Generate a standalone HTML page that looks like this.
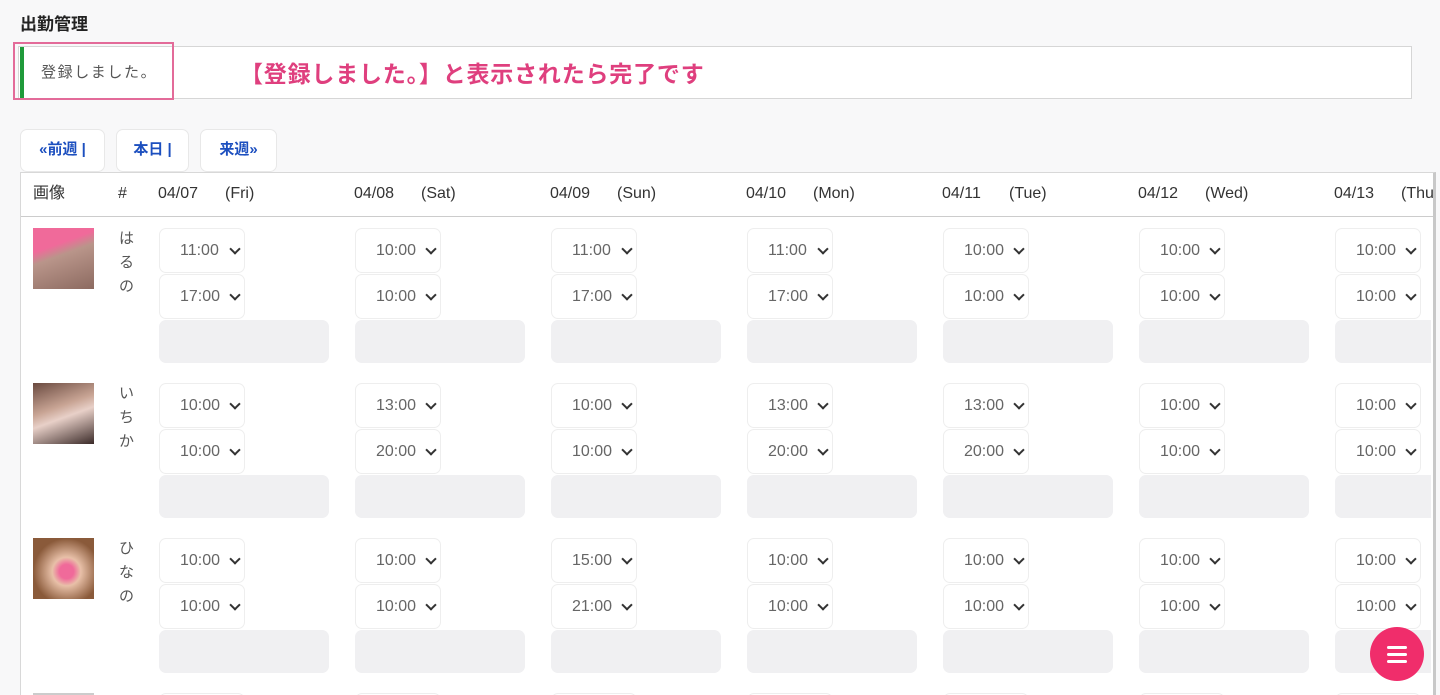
<!DOCTYPE html>
<html><head><meta charset="utf-8"><style>
*{box-sizing:border-box;margin:0;padding:0}
html,body{width:1440px;height:695px;overflow:hidden}
body{background:#f8f8f9;font-family:"Liberation Sans","Noto Sans CJK JP",sans-serif;position:relative;color:#333}
.abs{position:absolute}
h1{position:absolute;left:20px;top:10px;font-size:17px;font-weight:bold;color:#222}
.alert{left:18px;top:46px;width:1394px;height:53px;background:#fff;border:1px solid #d6d6d6}
.alert .bar{position:absolute;left:1px;top:0;width:4px;height:51px;background:#1f9a3a}
.pink{left:13px;top:42px;width:161px;height:58px;border:2px solid #e36b99}
.msg{left:41px;top:61px;font-size:15px;color:#555;letter-spacing:1.6px}
.note{left:240px;top:55px;font-size:23px;font-weight:bold;color:#df3f7e;letter-spacing:0.8px}
.btn{top:129px;height:43px;background:#fff;border:1px solid #e8e8e8;border-radius:7px;color:#1c4fbf;font-weight:bold;font-size:15px;text-align:center;line-height:40px}
.tbl{left:20px;top:172px;width:1416px;height:523px;background:#fff;border:1px solid #d8d8d8;border-bottom:none;border-right:3px solid #c8c8c8;overflow:hidden}
.hd{top:0;height:44px;width:100%;border-bottom:1px solid #ccc;font-size:16px;color:#333}
.hd span{position:absolute;top:11px;line-height:20px}
.row{left:0;width:1410px;height:155px;overflow:hidden}
.av{left:12px;top:11px;width:61px;height:61px}
.nm{left:98px;top:10px;width:14px;font-size:15px;line-height:24px;color:#555}
.c{position:absolute;top:0;width:170px;height:150px}
.s{position:absolute;left:0;width:86px;height:45px;border:1px solid #eee;border-radius:7px;background:#fff;font-size:16px;color:#666;padding-left:20px;line-height:43px}
.s:after{content:"";position:absolute;left:71px;top:16px;width:6px;height:6px;border-right:2px solid #333;border-bottom:2px solid #333;transform:rotate(45deg)}
.s1{top:11px}.s2{top:57px}
.t{position:absolute;left:0;top:103px;width:170px;height:43px;background:#f0f0f2;border-radius:7px}
.fab{left:1370px;top:627px;width:54px;height:54px;border-radius:50%;background:#f02d6b}
.fab i{position:absolute;left:17px;width:20px;height:2.5px;background:#fff;border-radius:2px}
</style></head><body>
<h1>出勤管理</h1>
<div class="abs alert"><div class="bar"></div></div>
<div class="abs pink"></div>
<div class="abs msg">登録しました。</div>
<div class="abs note">【登録しました。】と表示されたら完了です</div>
<div class="abs btn" style="left:20px;width:85px">«前週 |</div>
<div class="abs btn" style="left:116px;width:73px">本日 |</div>
<div class="abs btn" style="left:200px;width:77px">来週»</div>

<div class="abs tbl">
<div class="abs hd">
<span style="left:12px">画像</span><span style="left:97px">#</span>
<span style="left:137px">04/07</span><span style="left:204px">(Fri)</span>
<span style="left:333px">04/08</span><span style="left:400px">(Sat)</span>
<span style="left:529px">04/09</span><span style="left:596px">(Sun)</span>
<span style="left:725px">04/10</span><span style="left:792px">(Mon)</span>
<span style="left:921px">04/11</span><span style="left:988px">(Tue)</span>
<span style="left:1117px">04/12</span><span style="left:1184px">(Wed)</span>
<span style="left:1313px">04/13</span><span style="left:1380px">(Thu)</span>
</div>

<div class="abs row" style="top:44px">
<div class="abs av" style="background:linear-gradient(160deg,#f06a9a 0 30%,#b9958a 45%,#8c6a60)"></div>
<div class="abs nm">は る の</div>
<div class="c" style="left:138px"><div class="s s1">11:00</div><div class="s s2">17:00</div><div class="t"></div></div>
<div class="c" style="left:334px"><div class="s s1">10:00</div><div class="s s2">10:00</div><div class="t"></div></div>
<div class="c" style="left:530px"><div class="s s1">11:00</div><div class="s s2">17:00</div><div class="t"></div></div>
<div class="c" style="left:726px"><div class="s s1">11:00</div><div class="s s2">17:00</div><div class="t"></div></div>
<div class="c" style="left:922px"><div class="s s1">10:00</div><div class="s s2">10:00</div><div class="t"></div></div>
<div class="c" style="left:1118px"><div class="s s1">10:00</div><div class="s s2">10:00</div><div class="t"></div></div>
<div class="c" style="left:1314px"><div class="s s1">10:00</div><div class="s s2">10:00</div><div class="t"></div></div>
</div>

<div class="abs row" style="top:199px">
<div class="abs av" style="background:linear-gradient(160deg,#6a4a40,#c9a595 40%,#e8d0c8 55%,#3a2a28)"></div>
<div class="abs nm">い ち か</div>
<div class="c" style="left:138px"><div class="s s1">10:00</div><div class="s s2">10:00</div><div class="t"></div></div>
<div class="c" style="left:334px"><div class="s s1">13:00</div><div class="s s2">20:00</div><div class="t"></div></div>
<div class="c" style="left:530px"><div class="s s1">10:00</div><div class="s s2">10:00</div><div class="t"></div></div>
<div class="c" style="left:726px"><div class="s s1">13:00</div><div class="s s2">20:00</div><div class="t"></div></div>
<div class="c" style="left:922px"><div class="s s1">13:00</div><div class="s s2">20:00</div><div class="t"></div></div>
<div class="c" style="left:1118px"><div class="s s1">10:00</div><div class="s s2">10:00</div><div class="t"></div></div>
<div class="c" style="left:1314px"><div class="s s1">10:00</div><div class="s s2">10:00</div><div class="t"></div></div>
</div>

<div class="abs row" style="top:354px">
<div class="abs av" style="background:radial-gradient(circle at 55% 55%,#f06a9a 0 15%,#e8c0a8 30%,#8a5a3a 70%)"></div>
<div class="abs nm">ひ な の</div>
<div class="c" style="left:138px"><div class="s s1">10:00</div><div class="s s2">10:00</div><div class="t"></div></div>
<div class="c" style="left:334px"><div class="s s1">10:00</div><div class="s s2">10:00</div><div class="t"></div></div>
<div class="c" style="left:530px"><div class="s s1">15:00</div><div class="s s2">21:00</div><div class="t"></div></div>
<div class="c" style="left:726px"><div class="s s1">10:00</div><div class="s s2">10:00</div><div class="t"></div></div>
<div class="c" style="left:922px"><div class="s s1">10:00</div><div class="s s2">10:00</div><div class="t"></div></div>
<div class="c" style="left:1118px"><div class="s s1">10:00</div><div class="s s2">10:00</div><div class="t"></div></div>
<div class="c" style="left:1314px"><div class="s s1">10:00</div><div class="s s2">10:00</div><div class="t"></div></div>
</div>

<div class="abs row" style="top:509px;height:14px">
<div class="abs av" style="background:#ccc"></div>
<div class="c" style="left:138px"><div class="s s1"></div></div>
<div class="c" style="left:334px"><div class="s s1"></div></div>
<div class="c" style="left:530px"><div class="s s1"></div></div>
<div class="c" style="left:726px"><div class="s s1"></div></div>
<div class="c" style="left:922px"><div class="s s1"></div></div>
<div class="c" style="left:1118px"><div class="s s1"></div></div>
<div class="c" style="left:1314px"><div class="s s1"></div></div>
</div>
</div>

<div class="abs fab"><i style="top:19px"></i><i style="top:26px"></i><i style="top:33px"></i></div>
</body></html>
